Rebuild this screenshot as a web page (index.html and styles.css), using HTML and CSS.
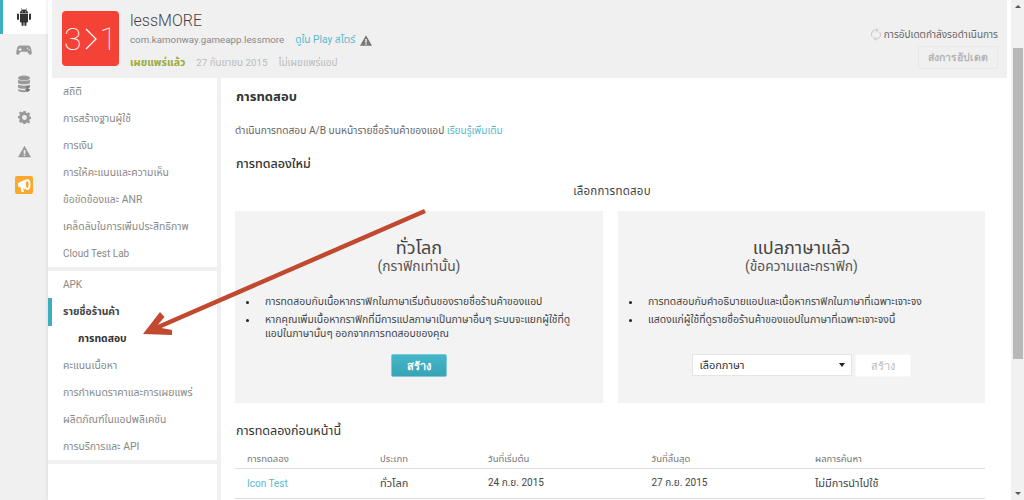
FILE: index.html
```html
<!DOCTYPE html>
<html lang="th">
<head>
<meta charset="utf-8">
<title>lessMORE</title>
<link rel="stylesheet" href="styles.css">
</head>
<body>
<div class="app">
  <nav class="rail">
    <div class="rail-item active">
      <svg class="ri" viewBox="0 0 16 18"><path fill="#333" d="M4 6h8v7.500a1 1 0 0 1-1 1h-.6V17a1 1 0 0 1-2 0v-2.500H7.600V17a1 1 0 0 1-2 0v-2.500H5a1 1 0 0 1-1-1zM1 6.500a1 1 0 0 1 2 0v4.500a1 1 0 0 1-2 0zM13 6.500a1 1 0 0 1 2 0v4.500a1 1 0 0 1-2 0zM4 5.400C4 3.800 4.800 2.700 5.900 2.100L5 .6l.4-.3 1 1.500a5 5 0 0 1 3.200 0l1-1.500.4.300-.9 1.500C11.200 2.700 12 3.800 12 5.400z"/><circle cx="6.300" cy="3.700" r=".5" fill="#fff"/><circle cx="9.700" cy="3.700" r=".5" fill="#fff"/></svg>
    </div>
    <div class="rail-item">
      <svg class="ri" viewBox="0 0 18 14"><path fill="#999" d="M4.500 2h9c2 0 3 1.500 3.500 4l.8 4.500c.2 1.700-1.800 2.500-3 1.200L12.500 9h-7l-2.300 2.700c-1.200 1.300-3.200.5-3-1.200L1 6c.5-2.500 1.500-4 3.500-4z"/><path fill="#f0f0f0" d="M4 4.500h1.200v1.300h1.300V7H5.200v1.300H4V7H2.700V5.800H4zM13 4.200a.8.8 0 1 1 0 1.600.8.8 0 0 1 0-1.600zM14.800 6a.8.8 0 1 1 0 1.600.8.8 0 0 1 0-1.600z"/></svg>
    </div>
    <div class="rail-item">
      <svg class="ri" viewBox="0 0 14 18"><ellipse cx="7" cy="3" rx="6" ry="2.600" fill="#999"/><path fill="#999" d="M1 4.800c1.500 1.500 10.500 1.500 12 0V8c-1.500 1.700-10.500 1.700-12 0zM1 9.500c1.500 1.500 10.500 1.500 12 0v3c-1.500 1.700-10.500 1.700-12 0zM1 14c1.500 1.500 10.500 1.500 12 0v1.500c-1.500 2.300-10.500 2.300-12 0z"/><path fill="#777" d="M9.500 11h2v3H13l-2.500 3L8 14h1.500z"/></svg>
    </div>
    <div class="rail-item">
      <svg class="ri small" viewBox="0 0 16 16"><path fill="#999" fill-rule="evenodd" d="M6.600 0h2.800l.4 2.200 1.300.6L13 1.500l2 2-1.300 1.900.6 1.300 2.200.4v2.800l-2.200.4-.6 1.300 1.300 1.900-2 2-1.900-1.300-1.300.6-.4 2.200H6.600l-.4-2.200-1.300-.6L3 14.500l-2-2 1.300-1.900-.6-1.300L-.2 8.900V6.100l2.200-.4.600-1.300L1 2.500l2-2 1.900 1.300 1.300-.6zM8 5a3 3 0 1 0 0 6 3 3 0 0 0 0-6z"/></svg>
    </div>
    <div class="rail-item">
      <svg class="ri small" viewBox="0 0 16 14"><path fill="#999" fill-rule="evenodd" d="M8 0l8 14H0zM7 5v5h2V5zm0 6v1.600h2V11z"/></svg>
    </div>
    <div class="rail-item">
      <span class="promo">
        <svg viewBox="0 0 18 18"><path fill="#fff" d="M3 7l7.500-3.500v10L8 12.300 9 16H6.500l-1-4.800L3 10.500z"/><ellipse cx="12.500" cy="8.500" rx="3" ry="5.500" fill="#fff"/><ellipse cx="12.300" cy="8.500" rx="1.300" ry="3.500" fill="#fba92d"/></svg>
      </span>
    </div>
  </nav>

  <div class="page">
    <header class="app-head">
      <div class="app-icon"><span>3</span><svg class="gt" viewBox="0 0 12 22"><path fill="none" stroke="#fff" stroke-width="1.300" d="M1 1l10 10L1 21"/></svg><span>1</span></div>
      <div class="app-info">
        <div class="app-name">lessMORE</div>
        <div class="app-pkg">
          <span>com.kamonway.gameapp.lessmore</span>
          <a class="link">ดูใน Play สโตร์</a>
          <svg class="warn" viewBox="0 0 16 14"><path fill="#777" fill-rule="evenodd" d="M8 0l8 14H0zM7 5v5h2V5zm0 6v1.600h2V11z"/></svg>
        </div>
        <div class="app-status">
          <strong>เผยแพร่แล้ว</strong>
          <span class="date">27 กันยายน 2015</span>
          <span class="small">ไม่เผยแพร่แอป</span>
        </div>
      </div>
      <div class="app-actions">
        <div class="pending">
          <svg viewBox="0 0 10 13"><path fill="none" stroke="#ccc" stroke-width="1.100" d="M1.500 9A4.200 4.200 0 0 1 6 2.300M8.500 4A4.200 4.200 0 0 1 4 10.700"/><path fill="#ccc" d="M5.500 0l2.200 2.200L5.500 4.500zM4.500 8.500L2.300 10.800 4.500 13z"/></svg>
          <span>การอัปเดตกำลังรอดำเนินการ</span>
        </div>
        <button class="send" type="button">ส่งการอัปเดต</button>
      </div>
    </header>

    <div class="body">
      <aside class="side">
        <ul class="group">
          <li>สถิติ</li>
          <li>การสร้างฐานผู้ใช้</li>
          <li>การเงิน</li>
          <li>การให้คะแนนและความเห็น</li>
          <li>ข้อขัดข้องและ ANR</li>
          <li>เคล็ดลับในการเพิ่มประสิทธิภาพ</li>
          <li class="latin">Cloud Test Lab</li>
        </ul>
        <ul class="group">
          <li class="latin">APK</li>
          <li class="current">รายชื่อร้านค้า</li>
          <li class="sub">การทดสอบ</li>
          <li>คะแนนเนื้อหา</li>
          <li>การกำหนดราคาและการเผยแพร่</li>
          <li>ผลิตภัณฑ์ในแอปพลิเคชัน</li>
          <li>การบริการและ API</li>
        </ul>
        <div class="group rest"></div>
      </aside>

      <main class="main">
        <h1>การทดสอบ</h1>
        <p class="desc">ดำเนินการทดสอบ A/B บนหน้ารายชื่อร้านค้าของแอป <a class="link">เรียนรู้เพิ่มเติม</a></p>
        <h2>การทดลองใหม่</h2>
        <div class="choose">เลือกการทดสอบ</div>
        <div class="cards">
          <section class="card">
            <h3>ทั่วโลก</h3>
            <h4>(กราฟิกเท่านั้น)</h4>
            <ul class="points">
              <li>การทดสอบกับเนื้อหากราฟิกในภาษาเริ่มต้นของรายชื่อร้านค้าของแอป</li>
              <li>หากคุณเพิ่มเนื้อหากราฟิกที่มีการแปลภาษาเป็นภาษาอื่นๆ ระบบจะแยกผู้ใช้ที่ดูแอปในภาษานั้นๆ ออกจากการทดสอบของคุณ</li>
            </ul>
            <div class="actions"><button class="create" type="button">สร้าง</button></div>
          </section>
          <section class="card">
            <h3>แปลภาษาแล้ว</h3>
            <h4>(ข้อความและกราฟิก)</h4>
            <ul class="points">
              <li>การทดสอบกับคำอธิบายแอปและเนื้อหากราฟิกในภาษาที่เฉพาะเจาะจง</li>
              <li>แสดงแก่ผู้ใช้ที่ดูรายชื่อร้านค้าของแอปในภาษาที่เฉพาะเจาะจงนี้</li>
            </ul>
            <div class="actions lang">
              <div class="select"><span>เลือกภาษา</span><i></i></div>
              <button class="create off" type="button">สร้าง</button>
            </div>
          </section>
        </div>
        <h2 class="prev">การทดลองก่อนหน้านี้</h2>
        <table class="tests">
          <thead>
            <tr><th>การทดลอง</th><th>ประเภท</th><th>วันที่เริ่มต้น</th><th>วันที่สิ้นสุด</th><th>ผลการค้นหา</th></tr>
          </thead>
          <tbody>
            <tr><td class="num"><a class="link">Icon Test</a></td><td>ทั่วโลก</td><td class="num">24 ก.ย. 2015</td><td class="num">27 ก.ย. 2015</td><td>ไม่มีการนำไปใช้</td></tr>
          </tbody>
        </table>
      </main>
    </div>
  </div>

  <div class="scrollbar">
    <span class="up"></span>
    <div class="track"><div class="thumb"></div></div>
    <span class="down"></span>
  </div>

  <svg class="arrow" viewBox="0 0 1024 500"><path fill="none" stroke="#c0492f" stroke-width="4.500" d="M425 211L156 328"/><path fill="#c0492f" d="M143 334L160 312 164.500 317 156 327 172 330 172 335z"/></svg>
</div>
</body>
</html>
```

FILE: styles.css
```css
* { box-sizing: border-box; }
html, body { margin: 0; height: 500px; overflow: hidden; }
body { font-family: Roboto, "Noto Sans", "Noto Sans Thai", "Liberation Sans", sans-serif; font-size: 11px; color: #444; background: #fff; }
ul { list-style: none; margin: 0; padding: 0; }
h1, h2, h3, h4, p { margin: 0; font-weight: 400; }
.app { position: relative; display: flex; width: 1024px; height: 500px; overflow: hidden; }
.link { color: #5bb8cf; text-decoration: none; }

.rail { width: 48px; flex: none; background: #f0f0f0; }
.rail-item { height: 33.600px; display: flex; align-items: center; justify-content: center; }
.rail-item.active { background: #fff; border-left: 3px solid #3eafc0; padding-right: 3px; }
.ri { width: 16px; height: 18px; }
.ri.small { width: 13px; height: 13px; }
.promo { width: 18px; height: 18px; background: #fba92d; border-radius: 2px; display: block; }
.promo svg { display: block; width: 18px; height: 18px; }

.page { width: 963px; flex: none; display: flex; flex-direction: column; height: 500px; box-shadow: -1px 0 3px rgba(0, 0, 0, .08); }
.app-head { height: 78px; flex: none; margin: 0 4px; background: #f0f0f0; display: flex; padding: 11px 9px 0 10px; }
.app-icon { width: 57px; height: 55px; background: #f44336; border-radius: 4px; color: #fff; display: flex; align-items: center; justify-content: center; gap: 3px; font-size: 32px; font-weight: 100; flex: none; }
.gt { width: 12px; height: 22px; }
.app-info { margin-left: 11px; flex: 1; }
.app-name { font-size: 16px; font-weight: 300; line-height: 18px; color: #444; margin-top: 1px; }
.app-pkg { display: flex; align-items: center; gap: 11px; line-height: 14px; margin-top: 3px; font-size: 9.750px; color: #888; }
.app-pkg .link { font-size: 10.200px; }
.warn { width: 12px; height: 11px; margin-left: -6px; }
.app-status { display: flex; gap: 11px; margin-top: 9px; color: #bbb; line-height: 14px; font-size: 10.500px; }
.app-status strong { color: #9aab3b; font-weight: 700; }
.app-status .date { font-size: 9.750px; }
.app-status .small { font-size: 10px; }
.app-actions { display: flex; flex-direction: column; align-items: flex-end; padding-top: 17px; flex: none; }
.pending { display: flex; align-items: center; gap: 3px; line-height: 14px; height: 13px; color: #666; font-size: 10px; }
.pending svg { width: 10px; height: 13px; }
.send { width: 80px; height: 23px; margin-top: 5px; border: 1px solid #e8e8e8; border-radius: 2px; background: #f0f0f0; color: #b5b5b5; font: 700 10.500px Roboto, "Noto Sans", sans-serif; padding: 0; }

.body { flex: 1; display: flex; min-height: 0; background: #f0f0f0; }
.side { width: 169px; flex: none; display: flex; flex-direction: column; gap: 4px; margin-right: 4px; }
.group { background: #fff; }
.group li { height: 27px; line-height: 28px; padding-left: 15px; color: #888; position: relative; white-space: nowrap; font-size: 10.400px; }
.group li.latin { font-size: 10px; }
.group li.current { color: #444; font-weight: 700; }
.group li.current::before { content: ""; position: absolute; left: 0; top: 0; width: 4px; height: 28px; background: #3eafc0; }
.group li.sub { padding-left: 30px; color: #333; font-weight: 700; }
.rest { flex: 1; }

.main { flex: 1; background: #fff; padding: 0 22px 0 14px; }
.main h1 { font-size: 13px; font-weight: 700; line-height: 18px; margin-top: 10px; color: #333; padding-left: 1px; }
.desc { line-height: 14px; margin-top: 18px; color: #666; font-size: 10.200px; }
.desc .link { font-size: 10px; }
.main h2 { font-size: 12.500px; font-weight: 500; line-height: 16px; margin-top: 18px; color: #333; padding-left: 1px; }
.choose { text-align: center; line-height: 14px; margin-top: 12px; color: #444; font-size: 11.500px; letter-spacing: .25px; }
.cards { display: grid; grid-template-columns: 368px 367px; gap: 15px; margin-top: 13px; }
.card { height: 192px; background: #f3f3f3; padding-top: 27px; display: flex; flex-direction: column; }
.card h3 { font-size: 18px; line-height: 20px; text-align: center; color: #444; }
.card h4 { font-size: 13.800px; line-height: 16px; text-align: center; color: #555; margin-top: 0; }
.points { margin: 21px 20px 0 11px; flex: 1; }
.points li { position: relative; padding-left: 19px; line-height: 14px; margin-bottom: 3px; font-size: 10.400px; color: #444; }
.points li + li { margin-top: 4px; }
.points li::before { content: ""; position: absolute; left: 0; top: 6px; width: 3px; height: 3px; border-radius: 50%; background: #222; }
.actions { display: flex; justify-content: center; height: 23px; margin-bottom: 26px; gap: 3px; }
.create { width: 56px; height: 23px; border: 1.500px solid #7dcbd6; border-radius: 2px; background: linear-gradient(#45b6c9, #37a4b4); color: #fff; font: 700 11px Roboto, "Noto Sans", sans-serif; padding: 0; }
.create.off { background: #fff; border-color: #f9f9f9; color: #bbb; font-weight: 400; }
.lang { padding-right: 1px; }
.select { width: 160px; height: 22px; background: #fff; border: 1px solid #e4e4e4; display: flex; align-items: center; justify-content: space-between; padding: 0 6px 0 7px; color: #333; }
.select i { border: 3px solid transparent; border-top: 4px solid #222; border-bottom: 0; }
.main h2.prev { margin-top: 20px; font-weight: 400; font-size: 12.500px; }
.tests { width: 750px; border-collapse: collapse; table-layout: fixed; margin-top: 11px; }
.tests th { font-weight: 400; font-size: 9.500px; color: #777; text-align: left; height: 18px; padding: 0 0 0 12px; border-bottom: 1px solid #ddd; }
.tests td { height: 30px; padding: 0 0 0 12px; border-bottom: 1px solid #ddd; color: #444; }
.tests td.num { font-size: 10px; }
.tests th:nth-child(1) { width: 133px; }
.tests th:nth-child(2) { width: 108px; }
.tests th:nth-child(3), .tests th:nth-child(4) { width: 163.500px; }

.scrollbar { width: 13px; flex: none; background: #f1f1f1; display: flex; flex-direction: column; align-items: center; }
.up, .down { height: 0; width: 0; border: 3px solid transparent; flex: none; }
.up { border-bottom: 3px solid #555; margin-top: 2px; }
.down { border-top: 3px solid #555; margin-bottom: 2px; }
.track { flex: 1; width: 100%; padding: 40px 1px 133px 2px; }
.thumb { height: 100%; background: #b8b8b8; }

.arrow { position: absolute; left: 0; top: 0; width: 1024px; height: 500px; pointer-events: none; }
```
